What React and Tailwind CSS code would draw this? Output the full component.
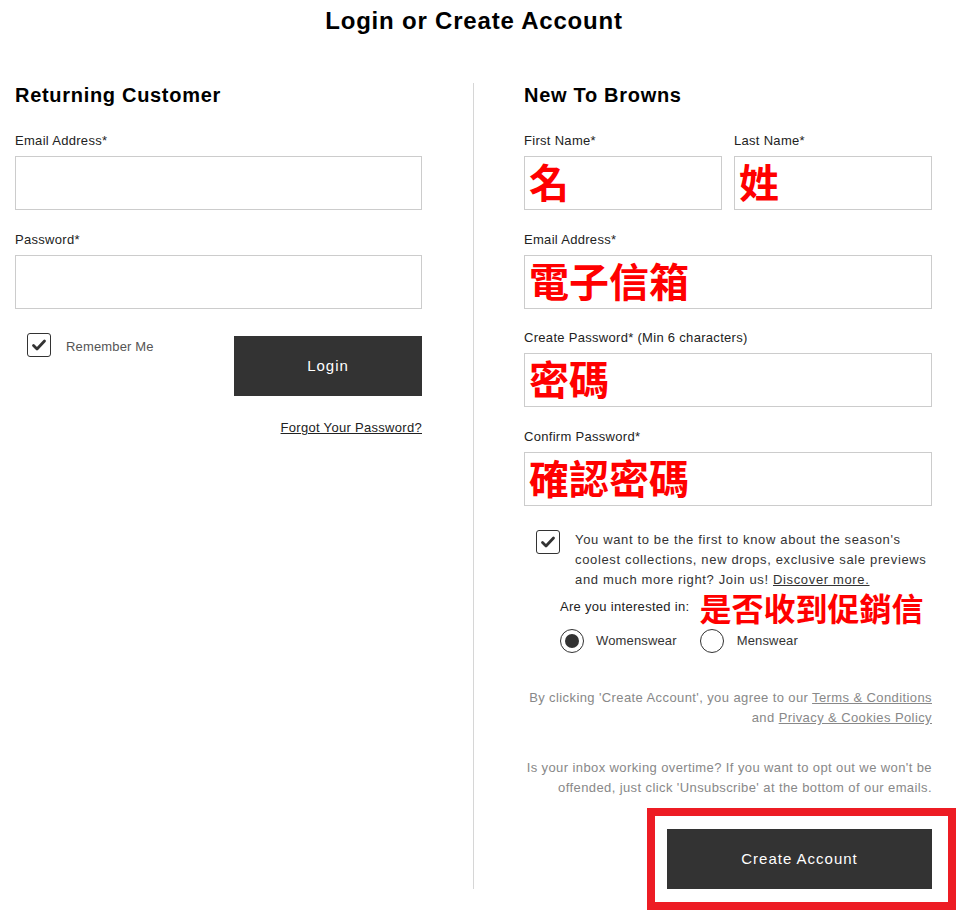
import React from 'react';

const font = { fontFamily: '"Liberation Sans", Arial, sans-serif' };
const cjk = { fontFamily: '"Noto Sans CJK TC", "Noto Sans CJK SC", sans-serif' };

const Check = () => (
  <div className="w-[24px] h-[24px] shrink-0 border border-[#333] rounded-[3px] flex items-center justify-center bg-white">
    <svg width="16" height="16" viewBox="0 0 16 16">
      <path d="M2.5 8.5 L6 12 L13.5 4" fill="none" stroke="#333" strokeWidth="2.8" strokeLinecap="round" strokeLinejoin="round" />
    </svg>
  </div>
);

const Radio = ({ checked }) => (
  <div className="w-[24px] h-[24px] shrink-0 rounded-full border-[1.5px] border-[#333] flex items-center justify-center bg-white">
    {checked && <div className="w-[14px] h-[14px] rounded-full bg-[#333]" />}
  </div>
);

const Field = ({ label, value, className = '' }) => (
  <div className={className}>
    <div className="text-[13px] leading-[16px] text-[#222] tracking-[0.3px] mb-[7px]">{label}</div>
    <div className="h-[54px] border border-[#cccccc] flex items-center pl-[4px]">
      {value && (
        <span className="text-[40px] font-bold text-[#ff0000] leading-[44px] pb-[4px]" style={cjk}>
          {value}
        </span>
      )}
    </div>
  </div>
);

export default function App() {
  return (
    <div className="w-[967px] h-[918px] bg-white text-[#222] overflow-hidden" style={font}>
      <div className="h-[42px] flex items-center justify-center">
        <h1 className="text-[24px] font-bold text-black leading-none tracking-[0.8px] ml-[-19px]">Login or Create Account</h1>
      </div>

      <div className="mt-[41px] flex items-stretch">
        {/* returning customer */}
        <div className="ml-[15px] w-[407px]">
          <h2 className="text-[20px] leading-[24px] font-bold text-black tracking-[0.7px]">Returning Customer</h2>
          <div className="mt-[26px]">
            <Field label="Email Address*" />
            <Field label="Password*" className="mt-[22px]" />
          </div>
          <div className="mt-[24px] flex items-start">
            <div className="ml-[12px] flex items-center">
              <Check />
              <span className="ml-[15px] mt-[3px] text-[13px] text-[#555] tracking-[0.15px]">Remember Me</span>
            </div>
            <button className="ml-auto mt-[3px] w-[188px] h-[60px] bg-[#333] text-white text-[15px] tracking-[1px]">
              Login
            </button>
          </div>
          <div className="mt-[19px] text-right">
            <a className="text-[13px] leading-[16px] text-[#222] underline tracking-[0.3px]">Forgot Your Password?</a>
          </div>
        </div>

        <div className="ml-[51px] w-px bg-[#d6d6d6]" />

        {/* new customer */}
        <div className="ml-[50px] w-[408px]">
          <h2 className="text-[20px] leading-[24px] font-bold text-black tracking-[0.7px]">New To Browns</h2>
          <div className="mt-[26px]">
            <div className="flex gap-[12px]">
              <Field label="First Name*" value="名" className="flex-1" />
              <Field label="Last Name*" value="姓" className="flex-1" />
            </div>
            <Field label="Email Address*" value="電子信箱" className="mt-[22px]" />
            <Field label="Create Password* (Min 6 characters)" value="密碼" className="mt-[21px]" />
            <Field label="Confirm Password*" value="確認密碼" className="mt-[22px]" />
          </div>

          <div className="mt-[24px] ml-[12px] flex items-start">
            <Check />
            <p className="ml-[15px] w-[357px] text-[13px] leading-[20px] text-[#333] tracking-[0.65px]">
              You want to be the first to know about the season's coolest collections, new drops, exclusive sale previews and much more right? Join us! <a className="underline">Discover more.</a>
            </p>
          </div>

          <div className="ml-[36px] h-[34px] flex items-center">
            <span className="text-[13px] text-[#222] tracking-[0.3px]">Are you interested in:</span>
            <span className="ml-[10px] text-[32px] font-bold text-[#ff0000] leading-[32px]" style={cjk}>
              是否收到促銷信
            </span>
          </div>

          <div className="ml-[36px] mt-[5px] flex items-center">
            <Radio checked />
            <span className="ml-[12px] text-[13px] text-[#333] tracking-[0.15px]">Womenswear</span>
            <div className="ml-[23px]">
              <Radio />
            </div>
            <span className="ml-[13px] text-[13px] text-[#333] tracking-[0.15px]">Menswear</span>
          </div>

          <p className="mt-[35px] text-right text-[13px] leading-[20px] text-[#888] tracking-[0.4px]">
            By clicking 'Create Account', you agree to our <a className="underline">Terms &amp; Conditions</a>
            <br />
            and <a className="underline">Privacy &amp; Cookies Policy</a>
          </p>

          <p className="mt-[30px] text-right text-[13px] leading-[20px] text-[#888] tracking-[0.4px]">
            Is your inbox working overtime? If you want to opt out we won't be offended, just click 'Unsubscribe' at the bottom of our emails.
          </p>

          <div className="mt-[31px] flex justify-end">
            <div className="relative">
              <button className="w-[265px] h-[60px] bg-[#333] text-white text-[15px] tracking-[1px]">
                Create Account
              </button>
              <div className="absolute -left-[20px] -top-[21px] w-[309px] h-[102px] border-[8px] border-[#ed1c24]" />
            </div>
          </div>
        </div>
      </div>
    </div>
  );
}
